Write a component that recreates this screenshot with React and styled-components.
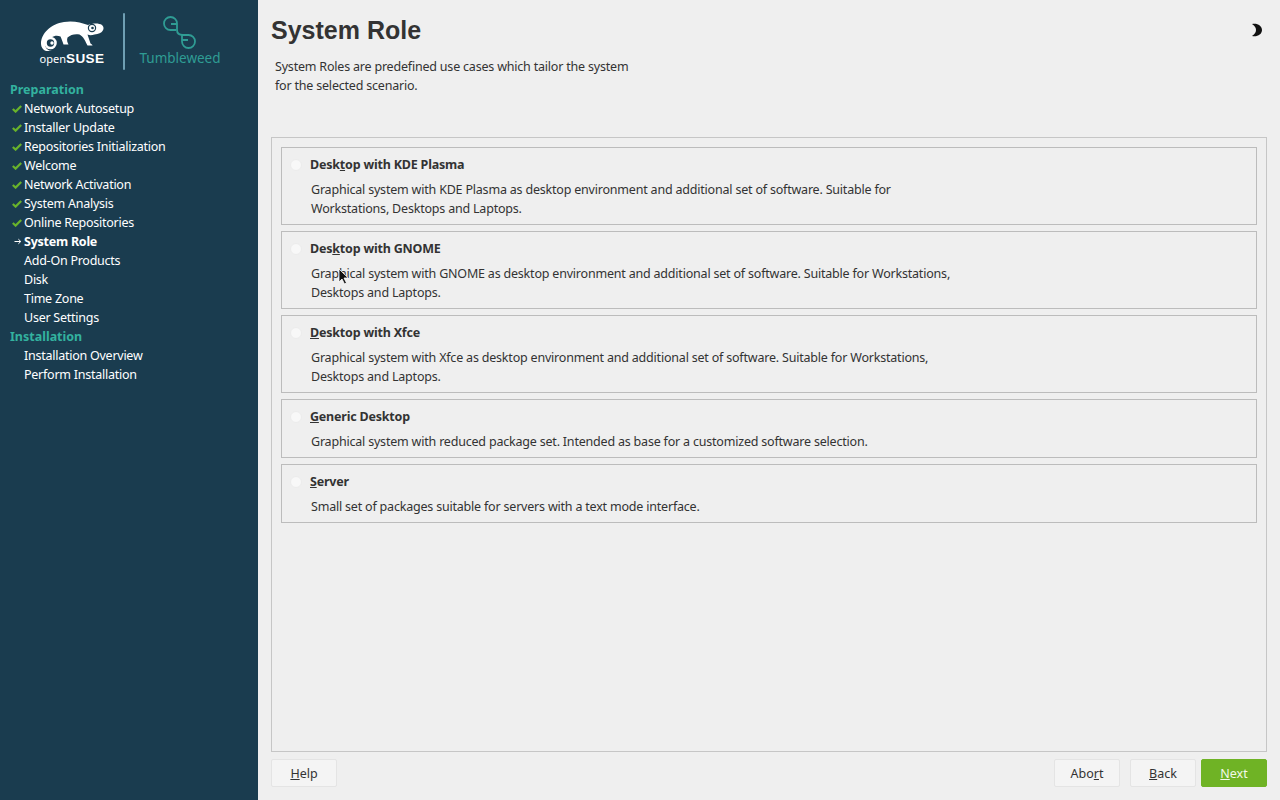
import React from "react";
import styled, { createGlobalStyle } from "styled-components";

const Global = createGlobalStyle`
  html, body { margin: 0; padding: 0; height: 100%; background: #efefef; }
  #root { height: 100%; }
  * { box-sizing: border-box; }
`;
const Page = styled.div`
  position: relative;
  width: 1280px; height: 800px; display: flex; overflow: hidden;
  font-family: "Noto Sans", sans-serif; font-size: 12.5px; color: #333;
`;
const Sidebar = styled.aside`
  width: 258px; flex: none; background: #1a3c4f; display: flex; flex-direction: column;
`;
const LogoBar = styled.div`
  height: 80px; display: flex; align-items: flex-start; padding: 13px 0 0 38px;
`;
const SuseLogo = styled.div`
  width: 68px; height: 52px; padding-top: 7px; display: flex; flex-direction: column; align-items: center;
`;
const SuseName = styled.div`
  color: #fff; line-height: 13px; margin-top: -1px; font-size: 11px; white-space: nowrap;
  font-family: "Noto Sans", sans-serif;
  b { font-family: "Liberation Sans", sans-serif; font-weight: 700; font-size: 13.5px; letter-spacing: .4px; }
`;
const Divider = styled.div`
  width: 2px; height: 57px; margin-left: 17px; background: #6f9fb3; border-radius: 1px;
`;
const WeedLogo = styled.div`
  margin-left: 14px; width: 82px; height: 56px; display: flex; flex-direction: column; align-items: center;
  padding-top: 3px;
`;
const WeedName = styled.div`
  color: #2f9c94; font-size: 13.5px; line-height: 16px; margin-top: 1px;
`;
const StepList = styled.nav`
  display: flex; flex-direction: column;
`;
const Heading = styled.div`
  height: 19px; line-height: 19px; padding-left: 10px; color: #33b29f; font-weight: 700; font-size: 12.5px;
`;
const Step = styled.div`
  height: 19px; display: flex; align-items: center; color: #fff;
  font-weight: ${p => (p.$current ? 700 : 400)}; letter-spacing: -.25px;
`;
const StepMark = styled.span`
  width: 24px; padding-left: 12px; display: flex; align-items: center; flex: none;
`;
const Main = styled.main`
  flex: 1; display: flex; flex-direction: column; padding: 13px 13px 13px 13px; background: #efefef;
`;
const TitleRow = styled.header`
  display: flex; justify-content: space-between; align-items: flex-start; height: 34px;
`;
const Title = styled.h1`
  margin: 0; font-family: "Liberation Sans Narrow", "Liberation Sans", sans-serif; font-weight: 700; font-size: 25px; line-height: 34px; color: #333;
`;
const ThemeToggle = styled.div`
  width: 12px; height: 14px; margin: 10px 4px 0 0; display: flex;
`;
const Intro = styled.p`
  margin: 10px 0 0 4px; height: 80px; line-height: 19px; letter-spacing: -.2px; color: #333;
`;
const Panel = styled.section`
  flex: 1; border: 1px solid #c6c6c6; padding: 9px; display: flex; flex-direction: column; gap: 6px;
`;
const Card = styled.div`
  border: 1px solid #bcbcbc; height: ${p => p.$h}px; padding: 7px 0 0 8px;
`;
const RoleHead = styled.div`
  display: flex; align-items: center; height: 19px; font-weight: 700; color: #333; letter-spacing: -.2px;
`;
const Radio = styled.span`
  width: 12px; height: 12px; border-radius: 50%; background: #f8f8f8; border: 1px solid #ececec; margin-right: 8px;
`;
const RoleText = styled.p`
  margin: 6px 0 0 21px; line-height: 19px; letter-spacing: -.2px; color: #333; white-space: pre-line;
`;
const Footer = styled.footer`
  display: flex; height: 28px; margin-top: 7px; justify-content: space-between;
`;
const Group = styled.div`
  display: flex; gap: 10px;
`;
const Button = styled.div`
  width: 66px; height: 28px; display: flex; align-items: center; justify-content: center;
  background: ${p => (p.$primary ? "#6fb325" : "#f4f4f4")}; color: ${p => (p.$primary ? "#f2f9e8" : "#333")};
  border: 1px solid ${p => (p.$primary ? "#6fb325" : "#e4e4e4")}; border-radius: 2px; margin-left: ${p => p.$gap || 0}px;
`;
const Pointer = styled.svg`
  position: absolute; left: 338px; top: 268px; width: 11px; height: 17px;
`;

const Check = () => (
  <svg width="10" height="8" viewBox="0 0 10 8"><path d="M.8 4 3.6 6.6 9.2 1" fill="none" stroke="#69b32b" strokeWidth="2.2" /></svg>
);
const Arrow = () => (
  <svg width="8" height="7" viewBox="0 0 8 7" style={{ marginLeft: 2 }}><path d="M.5 3.5h6M4.4 1.2l2.4 2.3-2.4 2.3" fill="none" stroke="#fff" strokeWidth="1" /></svg>
);

const prep = [
  ["Network Autosetup", 1], ["Installer Update", 1], ["Repositories Initialization", 1], ["Welcome", 1],
  ["Network Activation", 1], ["System Analysis", 1], ["Online Repositories", 1], ["System Role", 2],
  ["Add-On Products"], ["Disk"], ["Time Zone"], ["User Settings"],
];
const inst = ["Installation Overview", "Perform Installation"];

const roles = [
  { h: 78, t: <>Desk<u>t</u>op with KDE Plasma</>, d: "Graphical system with KDE Plasma as desktop environment and additional set of software. Suitable for\nWorkstations, Desktops and Laptops." },
  { h: 78, t: <>Des<u>k</u>top with GNOME</>, d: "Graphical system with GNOME as desktop environment and additional set of software. Suitable for Workstations,\nDesktops and Laptops." },
  { h: 78, t: <><u>D</u>esktop with Xfce</>, d: "Graphical system with Xfce as desktop environment and additional set of software. Suitable for Workstations,\nDesktops and Laptops." },
  { h: 59, t: <><u>G</u>eneric Desktop</>, d: "Graphical system with reduced package set. Intended as base for a customized software selection." },
  { h: 59, t: <><u>S</u>erver</>, d: "Small set of packages suitable for servers with a text mode interface." },
];

export default function App() {
  return (
    <Page>
      <Global />
      <Sidebar>
        <LogoBar>
          <SuseLogo>
            <svg width="66" height="33" viewBox="0 0 66 33">
              <path fill="#fff" d="M2 24C2 13 12 4 25 2c9-1.500 17 .5 24 3 5-2 11-2 14 0 2 2 2 4 .5 6-1 2-4 3-8 3.500-3 1-5 1-7 0 1 3 2 6 3 9 1 1 2 1 2 2l-5 0c-2-4-4-9-8-11-4-1-9 0-12 3-1 3 0 5 1 7l-5 0c-1-3-2-6-3-8-3-1-6-1-9 1C8 18 6 20 6 24c0 4 3 7 7 7H7C4 30 2 27 2 24z" />
              <circle cx="11.500" cy="23" r="5" fill="none" stroke="#fff" strokeWidth="2.600" />
              <circle cx="13" cy="23" r="1.700" fill="#fff" />
              <circle cx="53" cy="8" r="3.600" fill="none" stroke="#1a3c4f" strokeWidth="1.200" />
              <circle cx="53.500" cy="8" r="1.300" fill="#1a3c4f" />
            </svg>
            <SuseName>open<b>SUSE</b></SuseName>
          </SuseLogo>
          <Divider />
          <WeedLogo>
            <svg width="34" height="33" viewBox="0 0 34 33" fill="none" stroke="#2f9c94" strokeWidth="1.800">
              <path d="M13 14H7.500a6.500 6.500 0 1 1 6.500-6.500V14c0 5 5 5 6 5h5.500a6.500 6.500 0 1 1-6.500 6.500V19" />
              <path d="M8 8h6M19 24h6" />
            </svg>
            <WeedName>Tumbleweed</WeedName>
          </WeedLogo>
        </LogoBar>
        <StepList>
          <Heading>Preparation</Heading>
          {prep.map(([n, s]) => (
            <Step key={n} $current={s === 2}>
              <StepMark>{s === 1 && <Check />}{s === 2 && <Arrow />}</StepMark>{n}
            </Step>
          ))}
          <Heading>Installation</Heading>
          {inst.map(n => <Step key={n}><StepMark />{n}</Step>)}
        </StepList>
      </Sidebar>
      <Main>
        <TitleRow>
          <Title>System Role</Title>
          <ThemeToggle>
            <svg width="12" height="14" viewBox="0 0 12 14"><path d="M1 1c5-1.200 10 1.500 10 6s-5 7.200-10 6c3-2 4-3.800 4-6S4 3 1 1z" fill="#111" /></svg>
          </ThemeToggle>
        </TitleRow>
        <Intro>System Roles are predefined use cases which tailor the system<br />for the selected scenario.</Intro>
        <Panel>
          {roles.map((r, i) => (
            <Card key={i} $h={r.h}>
              <RoleHead><Radio />{r.t}</RoleHead>
              <RoleText>{r.d}</RoleText>
            </Card>
          ))}
        </Panel>
        <Footer>
          <Button><span><u>H</u>elp</span></Button>
          <Group>
            <Button>Abo<u>r</u>t</Button>
            <Button><span><u>B</u>ack</span></Button>
            <Button $primary style={{ marginLeft: -5 }}><span><u>N</u>ext</span></Button>
          </Group>
        </Footer>
      </Main>
      <Pointer viewBox="0 0 11 17"><path d="M1 1v13l3-3 2.500 5 2-1-2.500-5h4.200z" fill="#111" stroke="#fff" strokeWidth=".8" /></Pointer>
    </Page>
  );
}
